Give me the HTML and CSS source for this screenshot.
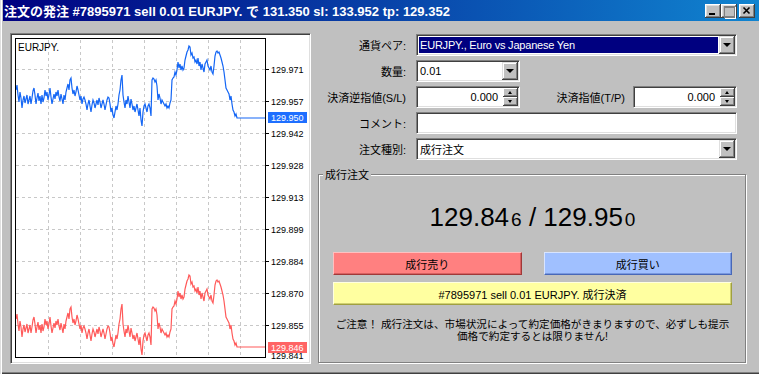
FILE: index.html
```html
<!DOCTYPE html>
<html lang="ja">
<head>
  <meta charset="UTF-8" />
  <title>注文の発注</title>
  <link rel="stylesheet" href="styles.css">
</head>
<body>
  <div class="window">
    <div class="titlebar">
      <span class="title">注文の発注 #7895971 sell 0.01 EURJPY. で 131.350 sl: 133.952 tp: 129.352</span>
      <div class="caption-btns">
        <span class="cbtn cbtn-min"></span>
        <span class="cbtn cbtn-max"></span>
        <span class="cbtn cbtn-close">
          <svg width="16" height="14" viewBox="0 0 16 14"><path d="M4.5 3.5 L10.5 9.5 M10.5 3.5 L4.5 9.5" stroke="#000" stroke-width="1.6" fill="none"/></svg>
        </span>
      </div>
    </div>

    <div class="content">
      <div class="chart-frame">
        <svg class="chart" width="297" height="327" viewBox="12 35 297 327">
          <defs>
            <clipPath id="plot"><rect x="16" y="39" width="249" height="318"/></clipPath>
            <polyline id="ask" fill="none" stroke-width="1.2" points="16,90 17,85 18,95 19,102 20,92 21,98 22,108 23,100 24,96 25,103 26,99 27,95 28,104 29,100 30,96 31,104 32,98 33,91 34,88 35,95 36,104 37,98 38,93 39,101 40,96 41,104 42,95 43,102 44,98 45,90 46,96 47,92 48,100 49,95 50,88 51,97 52,104 53,99 54,94 55,99 56,92 57,96 58,90 59,97 60,101 61,94 62,99 63,104 64,95 65,100 66,92 67,88 68,84 69,90 70,80 71,78 72,88 73,94 74,90 75,96 76,92 77,86 78,90 79,95 80,100 81,96 82,104 83,99 84,97 85,100 86,104 87,110 88,104 89,100 90,106 91,112 92,105 93,100 94,103 95,108 96,104 97,100 98,105 99,98 100,102 101,108 102,104 103,100 104,104 105,110 106,105 107,100 108,97 109,98 110,104 111,112 112,108 113,115 114,118 115,112 116,106 117,110 118,104 119,95 120,90 121,80 122,75 123,95 124,102 125,108 126,100 127,104 128,96 129,102 130,108 131,99 132,104 133,110 134,106 135,112 136,108 137,104 138,110 139,116 140,108 141,120 142,126 143,112 144,106 145,104 146,108 147,112 148,106 149,104 150,108 151,116 152,80 153,78 154,79 155,82 156,80 157,86 158,100 159,94 160,98 161,104 162,100 163,102 164,104 165,106 166,104 167,108 168,106 169,108 170,103 171,100 172,80 173,78 174,77 175,72 176,75 177,70 178,62 179,68 180,64 181,70 182,66 183,70 184,68 185,60 186,56 187,52 188,50 189,46 190,47 191,55 192,53 193,58 194,57 195,62 196,60 197,64 198,58 199,66 200,62 201,70 202,64 203,68 204,72 205,64 206,62 207,60 208,66 209,68 210,70 211,66 212,72 213,74 214,66 215,56 216,52 217,51 218,53 219,52 220,55 221,58 222,62 223,66 224,72 225,80 226,88 227,90 228,92 229,94 230,100 231,96 232,104 233,110 234,112 235,116 236,114 237,118 238,118 265,118"/>
          </defs>

          <g class="grid" stroke="#c8c8c8" stroke-dasharray="3 3" stroke-width="1">
            <line x1="16" y1="69.5" x2="265" y2="69.5"/>
            <line x1="16" y1="101.5" x2="265" y2="101.5"/>
            <line x1="16" y1="133.5" x2="265" y2="133.5"/>
            <line x1="16" y1="165.5" x2="265" y2="165.5"/>
            <line x1="16" y1="197.5" x2="265" y2="197.5"/>
            <line x1="16" y1="229.5" x2="265" y2="229.5"/>
            <line x1="16" y1="261.5" x2="265" y2="261.5"/>
            <line x1="16" y1="293.5" x2="265" y2="293.5"/>
            <line x1="16" y1="325.5" x2="265" y2="325.5"/>
            <line x1="48.5" y1="40" x2="48.5" y2="357"/>
            <line x1="80.5" y1="40" x2="80.5" y2="357"/>
            <line x1="112.5" y1="40" x2="112.5" y2="357"/>
            <line x1="144.5" y1="40" x2="144.5" y2="357"/>
            <line x1="176.5" y1="40" x2="176.5" y2="357"/>
            <line x1="208.5" y1="40" x2="208.5" y2="357"/>
            <line x1="240.5" y1="40" x2="240.5" y2="357"/>
          </g>

          <g clip-path="url(#plot)">
            <use href="#ask" stroke="#1466f5"/>
            <use href="#ask" stroke="#ff5a5a" transform="translate(0,229)"/>
          </g>

          <rect x="15.5" y="38.5" width="250" height="319" fill="none" stroke="#000"/>

          <g stroke="#000">
            <line x1="265" y1="69.5" x2="269" y2="69.5"/>
            <line x1="265" y1="101.5" x2="269" y2="101.5"/>
            <line x1="265" y1="133.5" x2="269" y2="133.5"/>
            <line x1="265" y1="165.5" x2="269" y2="165.5"/>
            <line x1="265" y1="197.5" x2="269" y2="197.5"/>
            <line x1="265" y1="229.5" x2="269" y2="229.5"/>
            <line x1="265" y1="261.5" x2="269" y2="261.5"/>
            <line x1="265" y1="293.5" x2="269" y2="293.5"/>
            <line x1="265" y1="325.5" x2="269" y2="325.5"/>
          </g>

          <text class="symbol" x="18" y="51">EURJPY.</text>

          <g class="axis">
            <text x="271" y="73">129.971</text>
            <text x="271" y="105">129.957</text>
            <text x="271" y="137">129.942</text>
            <text x="271" y="169">129.928</text>
            <text x="271" y="201">129.913</text>
            <text x="271" y="233">129.899</text>
            <text x="271" y="265">129.884</text>
            <text x="271" y="297">129.870</text>
            <text x="271" y="329">129.855</text>
            <text x="271" y="359">129.841</text>
          </g>

          <rect x="268" y="112" width="39" height="11" fill="#1e6fff"/>
          <text class="badge" x="271" y="121">129.950</text>
          <rect x="268" y="342" width="39" height="11" fill="#ff6464"/>
          <text class="badge" x="271" y="351">129.846</text>
        </svg>
      </div>

      <div class="order">
        <div class="row">
          <label>通貨ペア:</label>
          <div class="field combo full">
            <span class="value selected">EURJPY., Euro vs Japanese Yen</span>
            <span class="drop"></span>
          </div>
        </div>
        <div class="row">
          <label>数量:</label>
          <div class="field combo short">
            <span class="value">0.01</span>
            <span class="drop"></span>
          </div>
        </div>
        <div class="row">
          <label>決済逆指値(S/L)</label>
          <div class="field spin short">
            <span class="value num">0.000</span>
            <span class="spinner"><span class="up"></span><span class="down"></span></span>
          </div>
          <label class="inline-label">決済指値(T/P)</label>
          <div class="field spin short">
            <span class="value num">0.000</span>
            <span class="spinner"><span class="up"></span><span class="down"></span></span>
          </div>
        </div>
        <div class="row">
          <label>コメント:</label>
          <div class="field full"></div>
        </div>
        <div class="row">
          <label>注文種別:</label>
          <div class="field combo full">
            <span class="value">成行注文</span>
            <span class="drop"></span>
          </div>
        </div>

        <div class="group">
          <span class="group-title">成行注文</span>
          <div class="price">129.84<small>6</small> / 129.95<small>0</small></div>
          <div class="btn-row">
            <div class="btn btn-sell">成行売り</div>
            <div class="btn btn-buy">成行買い</div>
          </div>
          <div class="btn btn-close">#7895971 sell 0.01 EURJPY. 成行決済</div>
          <p class="notice">ご注意！ 成行注文は、市場状況によって約定価格がきまりますので、必ずしも提示<br>価格で約定するとは限りません!</p>
        </div>
      </div>
    </div>
  </div>
</body>
</html>
```

FILE: styles.css
```css
* {
  box-sizing: border-box;
}
body {
  margin: 0;
  font: 11px "Liberation Sans", "Noto Sans CJK JP", sans-serif;
  color: #000;
  background: #c0c0c0;
}
.window {
  width: 759px;
  height: 374px;
  padding-left: 3px;
  background: #c0c0c0;
  box-shadow: inset 1px 0 #dfdfdf, inset 2px 0 #fff, inset 0 -1px #404040, inset 0 -2px #808080;
  overflow: hidden;
}

/* title bar */
.titlebar {
  height: 21px;
  display: flex;
  align-items: center;
  justify-content: space-between;
  padding: 0 4px 0 1px;
  background: linear-gradient(to right, #000080, #1084d0);
  color: #fff;
}
.title {
  font-weight: bold;
  font-size: 13px;
  white-space: nowrap;
}
.caption-btns {
  display: flex;
}
.cbtn {
  position: relative;
  width: 16px;
  height: 14px;
  background: #c0c0c0;
  box-shadow: inset -1px -1px #404040, inset 1px 1px #fff, inset -2px -2px #808080, inset 2px 2px #dfdfdf;
}
.cbtn svg {
  display: block;
}
.cbtn-close {
  margin-left: 2px;
}
.cbtn-min::after {
  content: "";
  position: absolute;
  left: 4px;
  top: 9px;
  width: 6px;
  height: 2px;
  background: #000;
}
.cbtn-max::after {
  content: "";
  position: absolute;
  left: 3px;
  top: 2px;
  width: 9px;
  height: 9px;
  border: 1px solid #808080;
  border-top-width: 2px;
  box-shadow: 1px 1px 0 #fff;
}

/* main area */
.content {
  display: flex;
  gap: 7px;
  padding: 12px 0 0 7px;
}
.chart-frame {
  width: 301px;
  height: 331px;
  padding: 1px;
  background: #fff;
  border: 1px solid;
  border-color: #808080 #fff #fff #808080;
  box-shadow: inset 1px 1px #404040, inset -1px -1px #dfdfdf;
}
.chart {
  display: block;
  font-family: "Liberation Sans", sans-serif;
}
.chart .symbol {
  font-size: 10px;
}
.chart .axis text {
  font-size: 9px;
  fill: #000;
}
.chart .badge {
  font-size: 9px;
  fill: #fff;
}

/* order form */
.order {
  width: 428px;
  padding-top: 1px;
}
.row {
  display: flex;
  align-items: center;
  height: 22px;
  margin-bottom: 4px;
}
.row label {
  width: 98px;
  padding-right: 10px;
  text-align: right;
  white-space: nowrap;
}
.row .inline-label {
  width: 113px;
  padding-right: 8px;
}
.field {
  display: flex;
  align-items: stretch;
  height: 22px;
  padding: 1px;
  background: #fff;
  border: 1px solid;
  border-color: #808080 #fff #fff #808080;
  box-shadow: inset 1px 1px #404040, inset -1px -1px #dfdfdf;
}
.full {
  width: 321px;
}
.short {
  width: 104px;
}
.value {
  flex: 1;
  display: flex;
  align-items: center;
  margin: 1px;
  padding-left: 1px;
  white-space: nowrap;
  overflow: hidden;
}
.value.selected {
  background: #000080;
  color: #fff;
  letter-spacing: -0.2px;
}
.value.num {
  justify-content: flex-end;
  padding-right: 4px;
}
.drop {
  position: relative;
  width: 16px;
  background: #c0c0c0;
  box-shadow: inset -1px -1px #404040, inset 1px 1px #dfdfdf, inset -2px -2px #808080, inset 2px 2px #fff;
}
.drop::after {
  content: "";
  position: absolute;
  left: 4px;
  top: 7px;
  border-top: 4px solid #000;
  border-left: 4px solid transparent;
  border-right: 4px solid transparent;
}
.spinner {
  display: flex;
  flex-direction: column;
  width: 15px;
}
.spinner span {
  position: relative;
  flex: 1;
  background: #c0c0c0;
  box-shadow: inset -1px -1px #404040, inset 1px 1px #fff, inset -2px -2px #808080;
}
.spinner span::after {
  content: "";
  position: absolute;
  left: 5px;
  top: 3px;
  border-left: 2.5px solid transparent;
  border-right: 2.5px solid transparent;
}
.spinner .up::after {
  border-bottom: 3px solid #000;
}
.spinner .down::after {
  border-top: 3px solid #000;
}

/* market order group */
.group {
  position: relative;
  margin-top: 14px;
  height: 189px;
  padding: 0 13px 0 14px;
  border: 1px solid #808080;
  box-shadow: 1px 1px 0 #fff, inset 1px 1px 0 #fff;
}
.group-title {
  position: absolute;
  top: -8px;
  left: 4px;
  padding: 0 2px;
  line-height: 16px;
  background: #c0c0c0;
}
.price {
  margin-top: 27px;
  text-align: center;
  font-size: 26px;
  line-height: 30px;
}
.price small {
  margin-left: 2px;
  font-size: 19px;
}
.btn-row {
  display: flex;
  gap: 22px;
  margin-top: 17px;
}
.btn {
  flex: 1;
  height: 23px;
  display: flex;
  align-items: center;
  justify-content: center;
  border: 1px solid;
}
.btn-sell {
  background: #ff8080;
  border-color: #ffc0c0 #a03838 #a03838 #ffc0c0;
  box-shadow: inset -1px -1px #d86060;
}
.btn-buy {
  background: #a0c0ff;
  border-color: #d8e4ff #4868b8 #4868b8 #d8e4ff;
  box-shadow: inset -1px -1px #7898e0;
}
.btn-close {
  margin-top: 7px;
  background: #ffffa0;
  border-color: #ffffe0 #a0a040 #a0a040 #ffffe0;
  box-shadow: inset -1px -1px #d0d070;
}
.notice {
  margin: 13px 0 0;
  text-align: center;
  font-size: 10.6px;
  line-height: 12px;
}
```
